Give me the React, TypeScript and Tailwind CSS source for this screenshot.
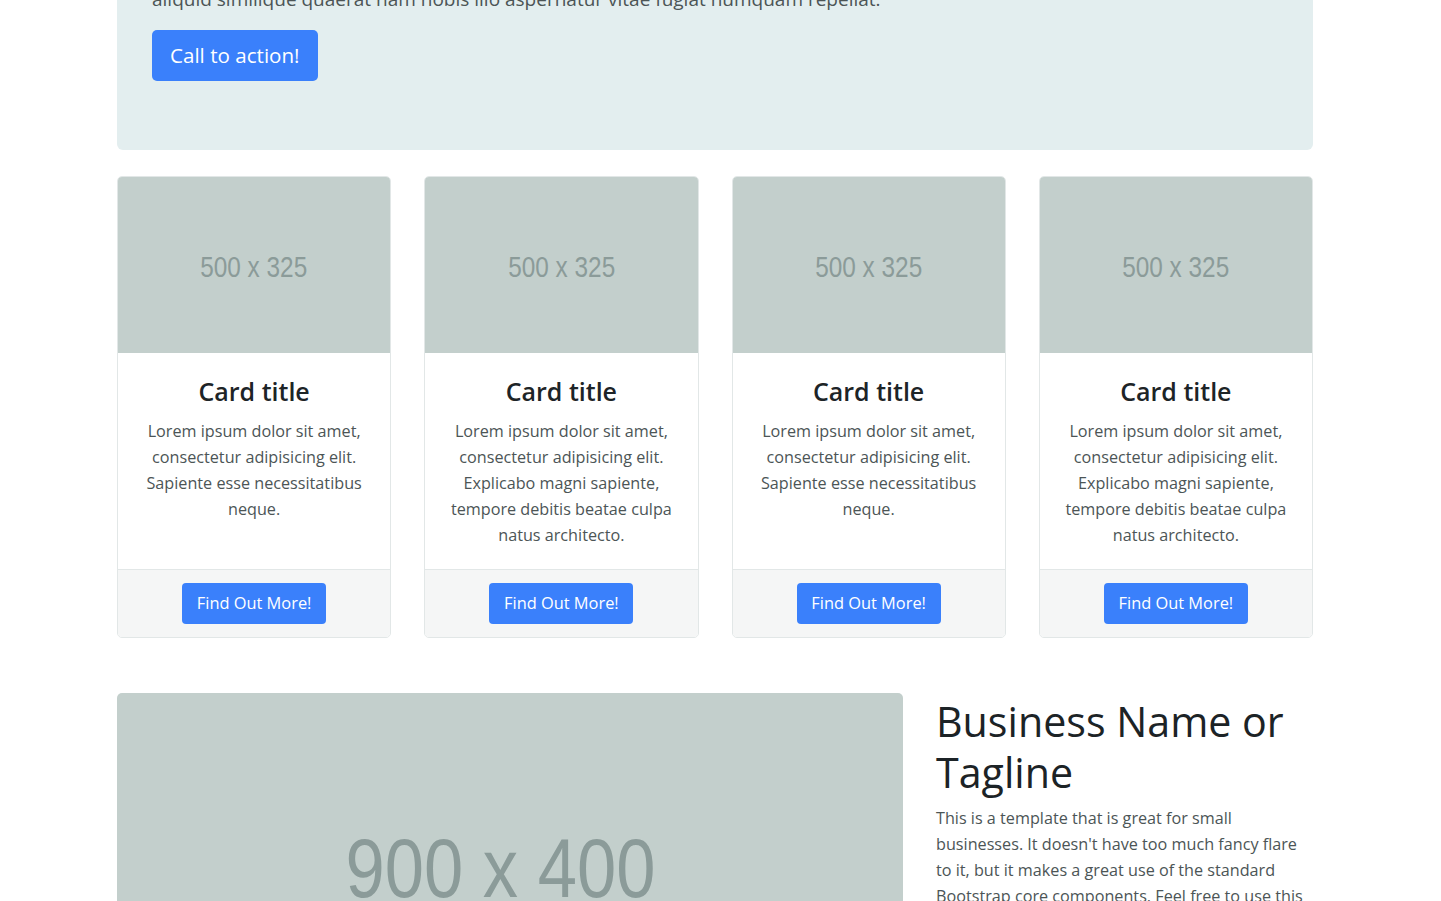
const font = { fontFamily: '"Open Sans", "Noto Sans", sans-serif' };

const cards = [
    'Lorem ipsum dolor sit amet, consectetur adipisicing elit. Sapiente esse necessitatibus neque.',
    'Lorem ipsum dolor sit amet, consectetur adipisicing elit. Explicabo magni sapiente, tempore debitis beatae culpa natus architecto.',
    'Lorem ipsum dolor sit amet, consectetur adipisicing elit. Sapiente esse necessitatibus neque.',
    'Lorem ipsum dolor sit amet, consectetur adipisicing elit. Explicabo magni sapiente, tempore debitis beatae culpa natus architecto.',
];

// placeholder image box, narrow arial-style label
const Placeholder = ({ label, className }: { label: string; className: string }) => (
    <div
        className={`flex items-center justify-center bg-[#c3cfcc] text-[#8b9b99] ${className}`}
        style={{ fontFamily: '"Liberation Sans", Arial, sans-serif' }}
    >
        <span className="inline-block scale-x-[0.84] whitespace-nowrap">{label}</span>
    </div>
);

const Card = ({ text }: { text: string }) => (
    <div className="flex flex-col overflow-hidden rounded-[5px] border border-[#e2e7e7] bg-white">
        <Placeholder label="500 x 325" className="h-[176px] pt-[6px] text-[29px]" />
        <div className="flex-1 px-[20px] pt-[23px] pb-[21px] text-center">
            <h4 className="mb-[11px] text-[25px] leading-[31px] font-semibold text-[#1d2427]">Card title</h4>
            <p className="text-[16.2px] leading-[26px] text-[#4c5556]">{text}</p>
        </div>
        <div className="flex justify-center border-t border-[#e2e7e7] bg-[#f5f6f6] py-[13px]">
            <button className="h-[41px] w-[144px] rounded-[4px] bg-[#3a80fb] text-[16.4px] text-white">
                Find Out More!
            </button>
        </div>
    </div>
);

export default function App() {
    return (
        <div className="min-h-screen overflow-hidden bg-white" style={font}>
            <div className="ml-[117px] w-[1196px]">
                <div className="rounded-b-[6px] bg-[#e3eeef] px-[35px] pb-[69px]">
                    <div className="flex h-[14px] flex-col justify-end overflow-hidden">
                        <p className="text-[19px] leading-[30px] text-[#4c5556]">
                            Lorem ipsum dolor sit amet, consectetur adipisicing elit. Ipsa, ipsam, eligendi, in quo sunt
                            possimus non incidunt odit vero
                            <br />
                            aliquid similique quaerat nam nobis illo aspernatur vitae fugiat numquam repellat.
                        </p>
                    </div>
                    <button className="mt-[16px] h-[51px] rounded-[5px] bg-[#3a80fb] px-[18px] text-[20.6px] text-white">
                        Call to action!
                    </button>
                </div>

                <div className="mt-[26px] grid grid-cols-4 gap-[33px]">
                    {cards.map((t, i) => (
                        <Card key={i} text={t} />
                    ))}
                </div>

                <div className="mt-[55px] flex gap-[33px]">
                    <Placeholder
                        label="900 x 400"
                        className="h-[349px] w-[786px] shrink-0 rounded-[5px] pr-[20px] text-[84px]"
                    />
                    <div className="flex-1 pt-[3px]">
                        <h1 className="mb-[7px] text-[41.2px] leading-[51px] text-[#1c2326]">
                            Business Name or Tagline
                        </h1>
                        <p className="text-[16.2px] leading-[26px] text-[#4c5556]">
                            This is a template that is great for small businesses. It doesn't have too much fancy flare
                            to it, but it makes a great use of the standard Bootstrap core components. Feel free to use
                            this template for any project you want!
                        </p>
                    </div>
                </div>
            </div>
        </div>
    );
}
